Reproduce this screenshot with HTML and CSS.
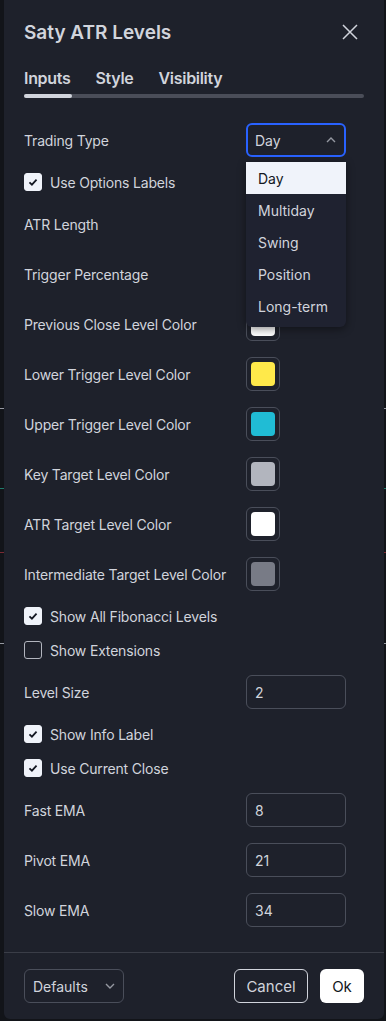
FILE: index.html
```html
<!DOCTYPE html>
<html lang="en">
<head>
<meta charset="utf-8">
<title>Saty ATR Levels</title>
<link rel="stylesheet" href="styles.css">
</head>
<body>
<div class="chart">
  <div class="level level-white" style="top:408px"></div>
  <div class="level level-green" style="top:488px"></div>
  <div class="level level-red" style="top:552px"></div>
  <div class="level level-white" style="top:643px"></div>
</div>
<div class="dialog">
  <div class="header">
    <div class="title">Saty ATR Levels</div>
    <svg class="close" width="16" height="16" viewBox="0 0 16 16"><path d="M1 1L15 15M15 1L1 15" stroke="#d1d4dc" stroke-width="1.5" fill="none"/></svg>
  </div>
  <div class="tabs">
    <div class="tab-row">
      <span class="tab active">Inputs</span>
      <span class="tab">Style</span>
      <span class="tab">Visibility</span>
    </div>
    <div class="tab-bar"><div class="tab-bar-active"></div></div>
  </div>

  <div class="content">
    <div class="row">
      <span class="label">Trading Type</span>
      <div class="select-wrap">
        <div class="select open">
          <span>Day</span>
          <svg width="10" height="6" viewBox="0 0 10 6"><path d="M1 5L5 1L9 5" stroke="#9598a1" stroke-width="1.4" fill="none"/></svg>
        </div>
        <div class="menu">
          <div class="menu-item selected">Day</div>
          <div class="menu-item">Multiday</div>
          <div class="menu-item">Swing</div>
          <div class="menu-item">Position</div>
          <div class="menu-item">Long-term</div>
        </div>
      </div>
    </div>
    <div class="check-row"><span class="cb on"><svg width="18" height="18" viewBox="0 0 18 18"><path d="M5 9.3L7.8 12L13 6.3" stroke="#131722" stroke-width="2" fill="none"/></svg></span><span class="label">Use Options Labels</span></div>
    <div class="row"><span class="label">ATR Length</span><div class="input"></div></div>
    <div class="row"><span class="label">Trigger Percentage</span><div class="input"></div></div>
    <div class="row"><span class="label">Previous Close Level Color</span><div class="swatch"><div class="swatch-inner c-white"></div></div></div>
    <div class="row"><span class="label">Lower Trigger Level Color</span><div class="swatch"><div class="swatch-inner c-yellow"></div></div></div>
    <div class="row"><span class="label">Upper Trigger Level Color</span><div class="swatch"><div class="swatch-inner c-cyan"></div></div></div>
    <div class="row"><span class="label">Key Target Level Color</span><div class="swatch"><div class="swatch-inner c-lightgray"></div></div></div>
    <div class="row"><span class="label">ATR Target Level Color</span><div class="swatch"><div class="swatch-inner c-white"></div></div></div>
    <div class="row"><span class="label">Intermediate Target Level Color</span><div class="swatch"><div class="swatch-inner c-gray"></div></div></div>
    <div class="check-row"><span class="cb on"><svg width="18" height="18" viewBox="0 0 18 18"><path d="M5 9.3L7.8 12L13 6.3" stroke="#131722" stroke-width="2" fill="none"/></svg></span><span class="label">Show All Fibonacci Levels</span></div>
    <div class="check-row"><span class="cb"></span><span class="label">Show Extensions</span></div>
    <div class="row"><span class="label">Level Size</span><div class="input">2</div></div>
    <div class="check-row"><span class="cb on"><svg width="18" height="18" viewBox="0 0 18 18"><path d="M5 9.3L7.8 12L13 6.3" stroke="#131722" stroke-width="2" fill="none"/></svg></span><span class="label">Show Info Label</span></div>
    <div class="check-row"><span class="cb on"><svg width="18" height="18" viewBox="0 0 18 18"><path d="M5 9.3L7.8 12L13 6.3" stroke="#131722" stroke-width="2" fill="none"/></svg></span><span class="label">Use Current Close</span></div>
    <div class="row"><span class="label">Fast EMA</span><div class="input">8</div></div>
    <div class="row"><span class="label">Pivot EMA</span><div class="input">21</div></div>
    <div class="row"><span class="label">Slow EMA</span><div class="input">34</div></div>
  </div>

  <div class="footer">
    <div class="defaults">
      <span>Defaults</span>
      <svg width="10" height="6" viewBox="0 0 10 6"><path d="M1 1L5 5L9 1" stroke="#9598a1" stroke-width="1.4" fill="none"/></svg>
    </div>
    <div class="actions">
      <div class="btn cancel">Cancel</div>
      <div class="btn ok">Ok</div>
    </div>
  </div>
</div>
</body>
</html>
```
FILE: styles.css
```css
* { box-sizing: border-box; }
html, body { margin: 0; padding: 0; }
body {
  width: 386px;
  height: 1021px;
  background: #121419;
  font-family: Inter, "Noto Sans", sans-serif;
  color: #d1d4dc;
  position: relative;
  overflow: hidden;
}
.chart { position: absolute; inset: 0; }
.level { position: absolute; left: 0; right: 0; height: 1px; }
.level-white { background: #9598a1; }
.level-green { background: #1f7a6a; }
.level-red { background: #7a2a33; }

.dialog {
  position: relative;
  width: 380px;
  height: 1019px;
  margin-left: 4px;
  background: #1e212b;
  border-radius: 0 0 6px 6px;
  display: flex;
  flex-direction: column;
}
.header {
  height: 64px;
  padding: 0 26px 0 20px;
  display: flex;
  align-items: center;
  justify-content: space-between;
}
.title { font-size: 19px; font-weight: 600; letter-spacing: 0; }
.close { display: block; }

.tabs { padding: 0 20px; }
.tab-row { display: flex; gap: 25px; height: 28px; align-items: center; }
.tab { font-size: 16px; font-weight: 600; letter-spacing: -0.3px; }
.tab-bar {
  margin-top: 2px;
  height: 4px;
  border-radius: 2px;
  background: #4a4d58;
}
.tab-bar-active { width: 48px; height: 4px; border-radius: 2px; background: #d1d4dc; }

.content {
  flex: 1;
  padding: 25px 20px 0 20px;
  display: flex;
  flex-direction: column;
  gap: 16px;
}
.label { font-size: 14px; color: #d1d4dc; white-space: nowrap; letter-spacing: -0.18px; }
.row {
  height: 34px;
  display: grid;
  grid-template-columns: 222px 100px;
  align-items: center;
}
.check-row {
  height: 18px;
  display: flex;
  align-items: center;
  gap: 8px;
}
.cb {
  width: 18px; height: 18px;
  border-radius: 3px;
  border: 1px solid #b2b5be;
  display: flex;
  align-items: center;
  justify-content: center;
}
.cb svg { display: block; }
.cb.on { background: #f0f3fa; border-color: #f0f3fa; }

.input {
  height: 34px;
  border: 1px solid #4a4e5a;
  border-radius: 6px;
  padding: 0 8px;
  display: flex;
  align-items: center;
  font-size: 14px;
  color: #d1d4dc;
}
.select-wrap { position: relative; width: 100px; height: 34px; }
.select {
  height: 34px;
  border: 2px solid #2962ff;
  border-radius: 6px;
  padding: 0 8px 0 7px;
  display: flex;
  align-items: center;
  justify-content: space-between;
  font-size: 14px;
}
.menu {
  position: absolute;
  top: 39px;
  left: 0;
  width: 100px;
  background: #1f2230;
  border-radius: 0 0 6px 6px;
  padding-bottom: 5px;
  box-shadow: 0 2px 8px rgba(0,0,0,0.45);
  z-index: 5;
}
.menu-item {
  height: 32px;
  padding-left: 12px;
  display: flex;
  align-items: center;
  font-size: 14px;
  color: #d1d4dc;
}
.menu-item.selected { background: #f0f3fa; color: #131722; }

.swatch {
  width: 34px; height: 34px;
  border: 1px solid #4a4e5a;
  border-radius: 6px;
  padding: 4px;
}
.swatch-inner { width: 24px; height: 24px; border-radius: 4px; }
.c-white { background: #ffffff; }
.c-yellow { background: #ffe94a; }
.c-cyan { background: #20bcd5; }
.c-lightgray { background: #b2b5be; }
.c-gray { background: #787b86; }

.footer {
  border-top: 1px solid #3a3d47;
  padding: 16px 20px;
  display: flex;
  align-items: center;
  justify-content: space-between;
}
.defaults {
  width: 100px; height: 34px;
  border: 1px solid #4a4e5a;
  border-radius: 6px;
  padding: 0 8px 0 8px;
  display: flex;
  align-items: center;
  justify-content: space-between;
  font-size: 14px;
}
.actions { display: flex; gap: 12px; }
.btn {
  height: 34px;
  border-radius: 6px;
  display: flex;
  align-items: center;
  justify-content: center;
  font-size: 15px;
}
.cancel { width: 74px; border: 1px solid #d1d4dc; color: #d1d4dc; }
.ok { width: 44px; background: #ffffff; color: #131722; }
```
